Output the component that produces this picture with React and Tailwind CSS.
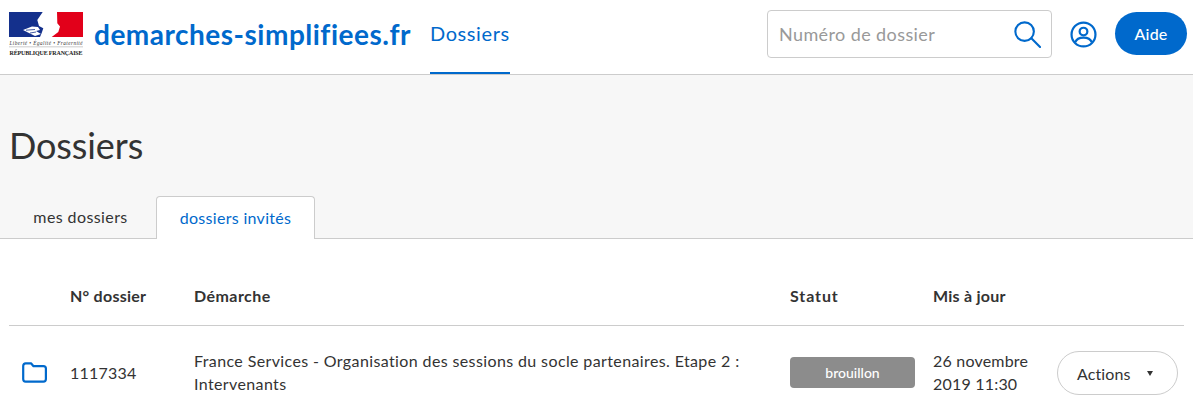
const font = { fontFamily: '"Lato", "Open Sans", sans-serif' };

function Logo() {
  return (
    <svg width="75" height="44" viewBox="0 0 75 44" className="shrink-0">
      <path d="M0 0 H33.7 L28.3 8 L30 14 L34.3 16.3 L32.7 21 L31 25 H0 Z" fill="#14308c" />
      <path d="M48 0 H74 V25 H42.7 L49.3 20 L51 14.6 L48.3 11.3 Z" fill="#e2001a" />
      <path d="M14 18 L23 14.5 L29 15 L31 18 L27 19 L32 22 L26 24 L19 20.5 Z" fill="#fff" />
      <path d="M17 18.2 L26 17.5 M21 21 L27 20" stroke="#14308c" strokeWidth="0.8" />
      <text x="0.5" y="33" fontSize="5.2" fontStyle="italic" fontFamily="Liberation Serif, serif" fill="#333" textLength="73">
        Liberté • Égalité • Fraternité
      </text>
      <rect x="0" y="34.6" width="74" height="0.6" fill="#aaa" />
      <text x="0.5" y="42.5" fontSize="6" fontWeight="700" fontFamily="Liberation Serif, serif" fill="#222" textLength="73">
        RÉPUBLIQUE FRANÇAISE
      </text>
    </svg>
  );
}

function SearchIcon() {
  return (
    <svg width="27" height="27" viewBox="0 0 28 28" fill="none" stroke="#0069cc" strokeWidth="2.2">
      <circle cx="11" cy="11" r="9.6" />
      <path d="M18 18 L27 27" strokeLinecap="round" />
    </svg>
  );
}

function UserIcon() {
  return (
    <svg width="27" height="27" viewBox="0 0 28 28" fill="none" stroke="#0069cc" strokeWidth="2.3">
      <circle cx="14" cy="14" r="12.4" />
      <circle cx="14" cy="11" r="4" />
      <path d="M5.5 22 C7 17.8 10 17.2 14 17.2 C18 17.2 21 17.8 22.5 22" />
    </svg>
  );
}

function FolderIcon() {
  return (
    <svg width="25" height="21" viewBox="0 0 25 21" fill="none" stroke="#0069cc" strokeWidth="2.2" strokeLinejoin="round">
      <path d="M1.2 4 C1.2 2.4 2.2 1.3 3.6 1.3 H9 L11.5 4.2 H21.4 C23 4.2 23.9 5.2 23.9 6.6 V17 C23.9 18.6 22.9 19.6 21.4 19.6 H3.6 C2.2 19.6 1.2 18.6 1.2 17 Z" />
    </svg>
  );
}

export default function App() {
  return (
    <div className="h-[412px] w-[1193px] overflow-hidden bg-white text-[#333]" style={font}>
      <header className="flex h-[75px] items-stretch border-b border-[#ccc] pl-[9px] pr-[6px]">
        <div className="flex items-center pb-[6px]">
          <Logo />
        </div>
        <div className="ml-[10px] flex items-center pb-[7px] text-[28px] font-bold tracking-[0.5px] text-[#0069cc]">
          demarches-simplifiees.fr
        </div>
        <nav className="ml-[19px] flex w-[80px] items-center justify-center border-b-2 border-[#0069cc] pb-[6px] text-[20px] tracking-[0.6px] text-[#0069cc]">
          Dossiers
        </nav>
        <div className="ml-auto flex items-center pb-[6px]">
          <div className="flex h-[48px] w-[285px] items-center justify-between rounded border border-[#ccc] pl-[11px] pr-[10px]">
            <span className="text-[18px] tracking-[0.4px] text-[#999]">Numéro de dossier</span>
            <SearchIcon />
          </div>
          <div className="ml-[18px] flex">
            <UserIcon />
          </div>
          <button className="ml-[18px] -mt-px h-[43px] w-[72px] rounded-[22px] bg-[#0069cc] text-[16px] font-medium tracking-[0.2px] text-white">
            Aide
          </button>
        </div>
      </header>

      <section className="flex h-[164px] flex-col justify-end border-b border-[#ccc] bg-[#f7f7f7]">
        <h1 className="pb-[30px] pl-[9px] text-[36px] leading-[42px] tracking-[-0.1px]">Dossiers</h1>
        <div className="flex h-[42px] pl-[9px]">
          <div className="flex w-[147px] items-center justify-center pr-[4px] text-[16px] tracking-[0.4px]">mes dossiers</div>
          <div className="flex h-[43px] w-[159px] items-center justify-center rounded-t border border-b-0 border-[#ccc] bg-white text-[16px] tracking-[0.3px] text-[#0069cc]">
            dossiers invités
          </div>
        </div>
      </section>

      <div className="px-[9px]">
        <div className="flex h-[87px] items-end border-b border-[#ccc] pb-[19px] text-[16px] font-bold leading-[20px] tracking-[0.25px]">
          <div className="w-[61px]" />
          <div className="w-[124px]">N° dossier</div>
          <div className="w-[596px] tracking-[0.45px]">Démarche</div>
          <div className="w-[143px] tracking-[0.9px]">Statut</div>
          <div>Mis à jour</div>
        </div>
        <div className="flex items-center pt-[23px] text-[16px] leading-[23px]">
          <div className="mt-[1px] flex w-[61px] justify-start pl-[13px]">
            <FolderIcon />
          </div>
          <div className="w-[124px] tracking-[0.2px]">1117334</div>
          <div className="w-[596px] pr-[40px] tracking-[0.38px]">
            France Services - Organisation des sessions du socle partenaires. Etape 2 : Intervenants
          </div>
          <div className="w-[143px]">
            <div className="flex h-[31px] w-[125px] items-center justify-center rounded bg-[#8c8c8c] text-[14px] font-medium text-white">
              brouillon
            </div>
          </div>
          <div className="w-[124px] tracking-[0.2px]">
            26 novembre
            <br />
            2019 11:30
          </div>
          <button className="mt-[2px] flex h-[44px] w-[121px] items-center rounded-[22px] border border-[#ccc] bg-white pl-[19px]">
            <span className="tracking-[0.1px]">Actions</span>
            <span className="ml-[17px] h-0 w-0 border-x-[3.5px] border-t-[5px] border-x-transparent border-t-[#333]" />
          </button>
        </div>
      </div>
    </div>
  );
}
